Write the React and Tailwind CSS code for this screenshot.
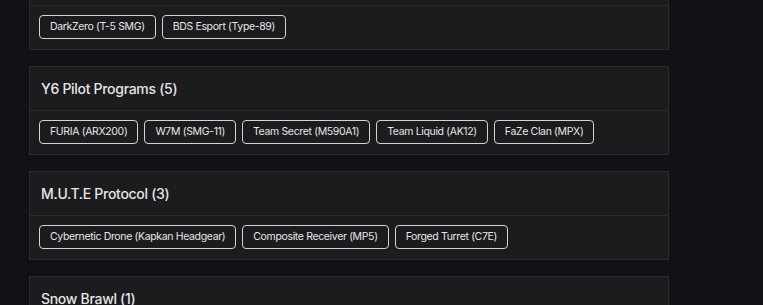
import React from "react";

const sections = [
  { title: "Y5 Pilot Programs (2)", items: ["DarkZero (T-5 SMG)", "BDS Esport (Type-89)"] },
  {
    title: "Y6 Pilot Programs (5)",
    items: ["FURIA (ARX200)", "W7M (SMG-11)", "Team Secret (M590A1)", "Team Liquid (AK12)", "FaZe Clan (MPX)"],
  },
  {
    title: "M.U.T.E Protocol (3)",
    items: ["Cybernetic Drone (Kapkan Headgear)", "Composite Receiver (MP5)", "Forged Turret (C7E)"],
  },
  { title: "Snow Brawl (1)", items: ["Snowball (Frost)"] },
];

export default function App() {
  return (
    <div
      className="w-[763px] h-[305px] overflow-hidden bg-[#131115]"
      style={{ fontFamily: "Inter, 'Noto Sans', sans-serif" }}
    >
      <div className="ml-[29px] w-[640px] mt-[-39px] flex flex-col gap-[16px]">
        {sections.map((s) => (
          <div key={s.title} className="bg-[#1c1b1e] border border-[#2c2b2f]">
            <div className="h-[44px] flex items-center px-[11px] border-b border-[#2c2b2f] text-[14px] font-medium text-[#e6e6e8] tracking-[-0.3px]">
              {s.title}
            </div>
            <div className="flex flex-wrap gap-[6px] px-[9px] pt-[9px] pb-[10px]">
              {s.items.map((it) => (
                <span
                  key={it}
                  className="h-[24px] flex items-center px-[10px] border border-[#d4d4d6] rounded-[4px] text-[10.5px] tracking-[-0.35px] text-[#e6e6e8]"
                >
                  {it}
                </span>
              ))}
            </div>
          </div>
        ))}
      </div>
    </div>
  );
}
